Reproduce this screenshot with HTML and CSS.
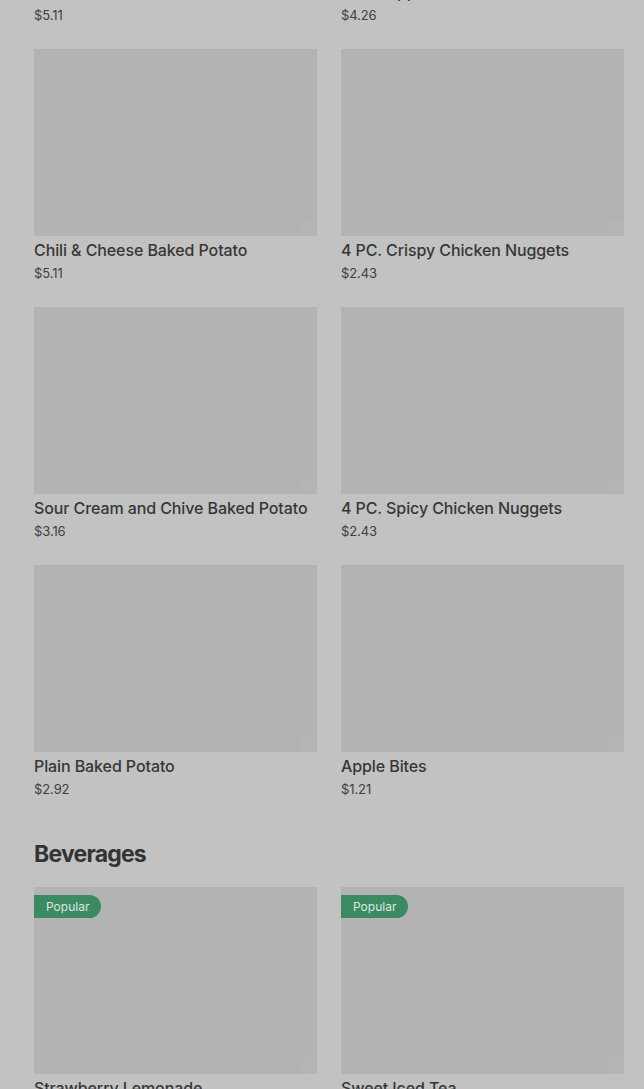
FILE: index.html
```html
<!DOCTYPE html>
<html>
<head>
<meta charset="utf-8">
<link rel="stylesheet" href="styles.css">
</head>
<body>
<main class="menu">
  <section class="section first">
    <div class="grid">
      <div class="card"><div class="thumb"></div><div class="title">Broccoli &amp; Cheese Baked Potato</div><div class="price">$5.11</div></div>
      <div class="card"><div class="thumb"></div><div class="title">3 PC. Apple Pie Bites</div><div class="price">$4.26</div></div>
      <div class="card"><div class="thumb"><span class="corner"></span></div><div class="title">Chili &amp; Cheese Baked Potato</div><div class="price">$5.11</div></div>
      <div class="card"><div class="thumb"><span class="corner"></span></div><div class="title">4 PC. Crispy Chicken Nuggets</div><div class="price">$2.43</div></div>
      <div class="card"><div class="thumb"><span class="corner"></span></div><div class="title">Sour Cream and Chive Baked Potato</div><div class="price">$3.16</div></div>
      <div class="card"><div class="thumb"><span class="corner"></span></div><div class="title">4 PC. Spicy Chicken Nuggets</div><div class="price">$2.43</div></div>
      <div class="card"><div class="thumb"><span class="corner"></span></div><div class="title">Plain Baked Potato</div><div class="price">$2.92</div></div>
      <div class="card"><div class="thumb"><span class="corner"></span></div><div class="title">Apple Bites</div><div class="price">$1.21</div></div>
    </div>
  </section>
  <section class="section">
    <h2 class="heading">Beverages</h2>
    <div class="grid">
      <div class="card"><div class="thumb"><span class="badge">Popular</span><span class="corner"></span></div><div class="title">Strawberry Lemonade</div><div class="price">$2.43</div></div>
      <div class="card"><div class="thumb"><span class="badge">Popular</span><span class="corner"></span></div><div class="title">Sweet Iced Tea</div><div class="price">$1.82</div></div>
    </div>
  </section>
</main>
</body>
</html>
```
FILE: styles.css
```css
html, body {
  margin: 0;
  padding: 0;
  background: #c2c2c2;
  overflow: hidden;
}
body {
  font-family: "Inter", "Roboto", "Liberation Sans", sans-serif;
  color: #363636;
}
.menu {
  padding: 0 20px 0 34px;
}
.section.first {
  margin-top: -209px;
}
.grid {
  display: grid;
  grid-template-columns: 283px 283px;
  column-gap: 24px;
  row-gap: 24px;
}
.card {
  display: flex;
  flex-direction: column;
}
.thumb {
  position: relative;
  height: 187px;
  background: #b3b3b3;
}
.corner {
  position: absolute;
  right: 0;
  bottom: 0;
  width: 16px;
  height: 16px;
  background: #b5b5b5;
}
.title {
  margin-top: 2px;
  font-size: 16px;
  line-height: 24px;
  font-weight: 500;
  color: #373737;
  white-space: nowrap;
  letter-spacing: -0.1px;
}
.price {
  margin-top: 1px;
  font-size: 13px;
  line-height: 20px;
  color: #3f3f3f;
  letter-spacing: -0.1px;
}
.heading {
  margin: 39px 0 17px;
  font-size: 23px;
  line-height: 32px;
  font-weight: 700;
  color: #333;
  letter-spacing: -0.8px;
}
.badge {
  position: absolute;
  left: 0;
  top: 8px;
  height: 23px;
  line-height: 23px;
  padding: 0 12px;
  background: #3c8a62;
  color: #dfe7e2;
  font-size: 12px;
  border-radius: 0 12px 12px 0;
}
```
